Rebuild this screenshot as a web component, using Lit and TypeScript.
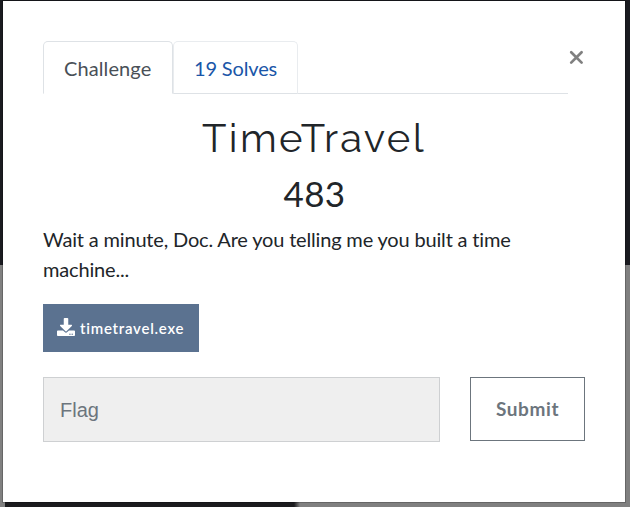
import { LitElement, html, css } from "lit";
import { customElement, property, state } from "lit/decorators.js";
import { classMap } from "lit/directives/class-map.js";

@customElement("challenge-tabs")
class ChallengeTabs extends LitElement {
  @property({ type: Number }) solves = 0;
  @state() active = 0;

  static styles = css`
    :host { display: block; }
    .tabs {
      display: flex;
      box-sizing: border-box;
      height: 53px;
      width: 525px;
      border-bottom: 1px solid #dee2e6;
    }
    .tab {
      box-sizing: border-box;
      height: 53px;
      padding: 0 20px;
      border: 1px solid #e9ecef;
      border-bottom-color: #dee2e6;
      border-radius: 5px 5px 0 0;
      font: 20px/53px Lato, sans-serif;
      color: #1a56a8;
      background: #fff;
      cursor: pointer;
      white-space: nowrap;
    }
    .first { width: 130px; letter-spacing: 0.1px; }
    .second { width: 125px; letter-spacing: -0.15px; }
    .active {
      color: #495057;
      border-color: #dee2e6 #dee2e6 #fff;
    }
  `;

  render() {
    return html`<div class="tabs">
      ${["Challenge", `${this.solves} Solves`].map(
        (label, i) => html`<div
          class=${classMap({ tab: true, first: i === 0, second: i === 1, active: i === this.active })}
          @click=${() => (this.active = i)}>${label}</div>`
      )}
    </div>`;
  }
}

@customElement("app-root")
class AppRoot extends LitElement {
  static styles = css`
    :host {
      display: block;
      box-sizing: border-box;
      width: 630px;
      height: 507px;
      padding: 1px 5px 5px 3px;
      overflow: hidden;
      background:
        linear-gradient(90deg, #808080 5px, #1b1b1e 5px, #1b1b1e 294px, #808080 300px) 0 502px / 630px 5px no-repeat,
        linear-gradient(#1a1b20 265px, #808080 265px);
      font-family: Lato, sans-serif;
      color: #212529;
    }
    .modal {
      box-sizing: border-box;
      width: 622px;
      height: 501px;
      padding: 40px;
      background: #fff;
      box-shadow: 0 0 0 1px rgba(0, 0, 0, 0.2);
    }
    .top { display: flex; justify-content: space-between; }
    .close {
      width: 15px;
      height: 15px;
      margin: 9px 1px 0 0;
    }
    .title {
      margin: 20px 0 0;
      height: 48px;
      text-align: center;
      font: 400 40px/48px Raleway, Lato, sans-serif;
      letter-spacing: 2.4px;
    }
    .score {
      margin: 10px 0 0;
      height: 42px;
      padding-left: 1px;
      text-align: center;
      font: 400 35px/42px Lato, sans-serif;
      letter-spacing: 0.3px;
    }
    .text {
      margin: 10px 0 0;
      width: 500px;
      font-size: 20px;
      line-height: 30px;
      letter-spacing: -0.17px;
      font-variant-ligatures: none;
    }
    .file {
      display: flex;
      align-items: center;
      box-sizing: border-box;
      width: 156px;
      height: 48px;
      margin-top: 20px;
      padding-left: 14px;
      gap: 5px;
      background: #5b7290;
      color: #fff;
      font-size: 15px;
      font-weight: 600;
      letter-spacing: 0.75px;
    }
    .file svg { width: 18px; height: 18px; flex: none; margin-top: -2px; }
    .form { display: flex; gap: 30px; margin-top: 25px; }
    .flag {
      box-sizing: border-box;
      width: 397px;
      height: 65px;
      padding: 2px 16px 0;
      border: 1px solid #ced0d2;
      border-radius: 0;
      background: #efefef;
      font: 20px "Liberation Sans", Arial, sans-serif;
      outline: none;
    }
    .flag::placeholder { color: #6c757d; opacity: 1; }
    .submit {
      box-sizing: border-box;
      width: 115px;
      height: 64px;
      padding: 0 0 2px;
      border: 1px solid #6c757d;
      background: #fff;
      color: #6c757d;
      font: 700 19px Lato, sans-serif;
      letter-spacing: 0.6px;
    }
  `;

  render() {
    return html`
      <div class="modal">
        <div class="top">
          <challenge-tabs .solves=${19}></challenge-tabs>
          <svg class="close" viewBox="0 0 15 15" fill="none" stroke="#808080" stroke-width="2.7" stroke-linecap="round">
            <path d="M2.2 2.2 12.600 12.600M12.600 2.200 2.200 12.600" />
          </svg>
        </div>
        <h2 class="title">TimeTravel</h2>
        <h3 class="score">483</h3>
        <p class="text">Wait a minute, Doc. Are you telling me you built a time machine...</p>
        <div class="file">
          <svg viewBox="0 0 512 512" fill="currentColor">
            <path d="M216 0h80c13.300 0 24 10.700 24 24v168h87.700c17.800 0 26.700 21.500 14.100 34.100L269.700 378.300c-7.500 7.500-19.800 7.500-27.300 0L90.100 226.100c-12.600-12.600-3.700-34.100 14.100-34.100H192V24c0-13.300 10.700-24 24-24zm296 376v112c0 13.300-10.700 24-24 24H24c-13.300 0-24-10.700-24-24V376c0-13.300 10.700-24 24-24h146.700l49 49c20.100 20.100 52.500 20.100 72.600 0l49-49H488c13.300 0 24 10.700 24 24zm-124 88c0-11-9-20-20-20s-20 9-20 20 9 20 20 20 20-9 20-20zm64 0c0-11-9-20-20-20s-20 9-20 20 9 20 20 20 20-9 20-20z" />
          </svg>
          <span>timetravel.exe</span>
        </div>
        <div class="form">
          <input class="flag" placeholder="Flag" />
          <button class="submit">Submit</button>
        </div>
      </div>
    `;
  }
}
